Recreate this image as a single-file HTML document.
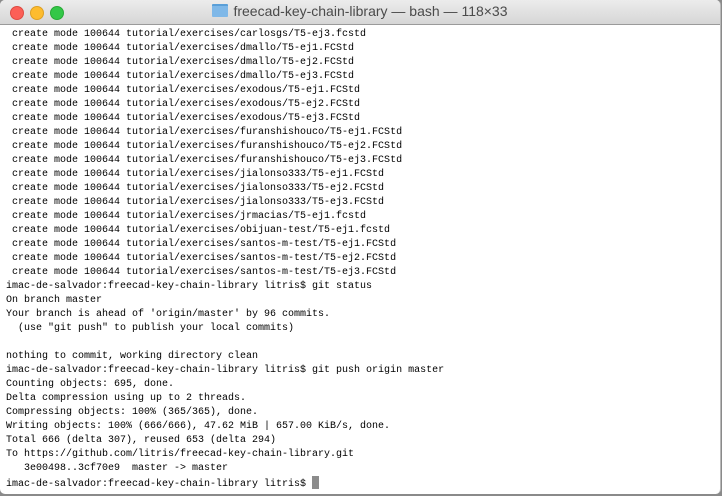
<!DOCTYPE html>
<html><head><style>
html,body{margin:0;padding:0;width:722px;height:496px;overflow:hidden;background:#8a8a8a;}
.win{position:absolute;left:0;top:0;width:720px;height:494px;background:#fff;border-radius:5px;overflow:hidden;border-right:1px solid #b8b8b8;}
.tb{position:absolute;left:0;top:0;width:100%;height:24px;background:linear-gradient(#ececec,#d6d6d6);border-bottom:1px solid #9a9a9a;}
.dot{position:absolute;top:6px;width:12px;height:12px;border-radius:50%;}
.title{position:absolute;left:0;right:0;top:3px;text-align:center;font:14px "Liberation Sans",sans-serif;color:#4a4a4a;}
.fold{display:inline-block;width:16px;height:13px;background:#7fb8e8;border-radius:1px;vertical-align:-1px;margin-right:5px;border-top:2px solid #5a9fd8;box-sizing:border-box;}
pre{position:absolute;left:6px;top:28px;margin:0;font:10px/14px "Liberation Mono",monospace;color:#000;}
.cur{display:inline-block;width:7px;height:13px;background:#8c8c8c;vertical-align:-3px;}
</style></head><body>
<div class="win">
<div class="tb">
<div class="dot" style="left:10px;background:#fc5f57;border:0.5px solid #de4a42"></div>
<div class="dot" style="left:30px;background:#fdbc2e;border:0.5px solid #dea123"></div>
<div class="dot" style="left:50px;background:#33c748;border:0.5px solid #27aa35"></div>
<div class="title"><span class="fold"></span>freecad-key-chain-library — bash — 118×33</div>
</div>
<pre> create mode 100644 tutorial/exercises/carlosgs/T5-ej3.fcstd
 create mode 100644 tutorial/exercises/dmallo/T5-ej1.FCStd
 create mode 100644 tutorial/exercises/dmallo/T5-ej2.FCStd
 create mode 100644 tutorial/exercises/dmallo/T5-ej3.FCStd
 create mode 100644 tutorial/exercises/exodous/T5-ej1.FCStd
 create mode 100644 tutorial/exercises/exodous/T5-ej2.FCStd
 create mode 100644 tutorial/exercises/exodous/T5-ej3.FCStd
 create mode 100644 tutorial/exercises/furanshishouco/T5-ej1.FCStd
 create mode 100644 tutorial/exercises/furanshishouco/T5-ej2.FCStd
 create mode 100644 tutorial/exercises/furanshishouco/T5-ej3.FCStd
 create mode 100644 tutorial/exercises/jialonso333/T5-ej1.FCStd
 create mode 100644 tutorial/exercises/jialonso333/T5-ej2.FCStd
 create mode 100644 tutorial/exercises/jialonso333/T5-ej3.FCStd
 create mode 100644 tutorial/exercises/jrmacias/T5-ej1.fcstd
 create mode 100644 tutorial/exercises/obijuan-test/T5-ej1.fcstd
 create mode 100644 tutorial/exercises/santos-m-test/T5-ej1.FCStd
 create mode 100644 tutorial/exercises/santos-m-test/T5-ej2.FCStd
 create mode 100644 tutorial/exercises/santos-m-test/T5-ej3.FCStd
imac-de-salvador:freecad-key-chain-library litris$ git status
On branch master
Your branch is ahead of 'origin/master' by 96 commits.
  (use "git push" to publish your local commits)

nothing to commit, working directory clean
imac-de-salvador:freecad-key-chain-library litris$ git push origin master
Counting objects: 695, done.
Delta compression using up to 2 threads.
Compressing objects: 100% (365/365), done.
Writing objects: 100% (666/666), 47.62 MiB | 657.00 KiB/s, done.
Total 666 (delta 307), reused 653 (delta 294)
To https://github.com/litris/freecad-key-chain-library.git
   3e00498..3cf70e9  master -&gt; master
imac-de-salvador:freecad-key-chain-library litris$ <span class="cur"></span></pre>
</div>
</body></html>
